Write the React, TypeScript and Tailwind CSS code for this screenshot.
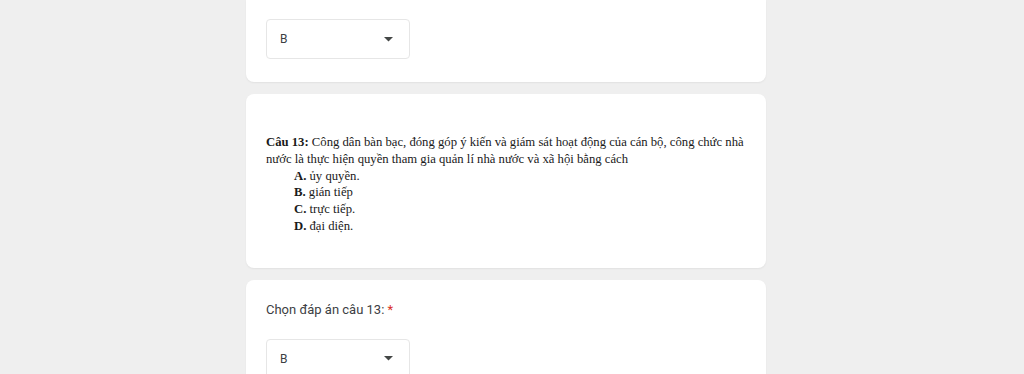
import React from "react";

function Dropdown({ value }: { value: string }) {
  return (
    <div className="flex h-[40px] w-[144px] items-center justify-between rounded-[4px] border border-[#e6e6e6] bg-white pl-[13px] pr-[16px]">
      <span className="text-[12px] text-[#3c4043]" style={{ fontFamily: "Roboto, 'Noto Sans', sans-serif" }}>{value}</span>
      <svg width="9" height="5" viewBox="0 0 9 5"><path d="M0 0 L9 0 L4.5 4.5 Z" fill="#444746" /></svg>
    </div>
  );
}

export default function App() {
  return (
    <div className="min-h-[374px] w-full overflow-hidden bg-[#efefef]">
      <div className="flex w-[1012px] flex-col items-center">
        <div className="w-[520px] rounded-b-[8px] bg-white px-5 pb-[23px] pt-[19px] shadow-[0_1px_2px_rgba(0,0,0,0.06)]">
          <Dropdown value="B" />
        </div>
        <div className="mt-[12px] w-[520px] rounded-[8px] bg-white px-5 pb-[33px] pt-[40px] shadow-[0_1px_2px_rgba(0,0,0,0.06)]">
          <div className="whitespace-nowrap text-[12.7px] leading-[16.8px] text-[#1a1a1a]" style={{ fontFamily: "'Liberation Serif', 'DejaVu Serif', serif" }}>
            <div><b>Câu 13:</b> Công dân bàn bạc, đóng góp ý kiến và giám sát hoạt động của cán bộ, công chức nhà</div>
            <div>nước là thực hiện quyền tham gia quản lí nhà nước và xã hội bằng cách</div>
            <div className="pl-[28px]"><b>A.</b> ủy quyền.</div>
            <div className="pl-[28px]"><b>B.</b> gián tiếp</div>
            <div className="pl-[28px]"><b>C.</b> trực tiếp.</div>
            <div className="pl-[28px]"><b>D.</b> đại diện.</div>
          </div>
        </div>
        <div className="mt-[12px] w-[520px] rounded-t-[8px] bg-white px-5 pb-[40px] pt-[20px] shadow-[0_1px_2px_rgba(0,0,0,0.06)]">
          <div className="text-[13px] leading-[20px] text-[#3c4043]" style={{ fontFamily: "Roboto, 'Noto Sans', sans-serif" }}>
            Chọn đáp án câu 13: <span className="text-[#d93025]">*</span>
          </div>
          <div className="mt-[19px]">
            <Dropdown value="B" />
          </div>
        </div>
      </div>
    </div>
  );
}
